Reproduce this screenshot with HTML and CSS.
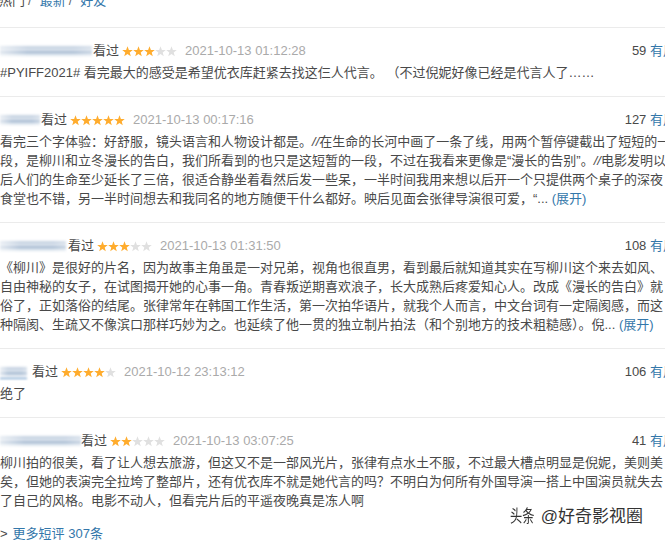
FILE: index.html
```html
<!DOCTYPE html>
<html lang="zh-CN">
<head>
<meta charset="utf-8">
<title>短评</title>
<link rel="stylesheet" href="styles.css">
</head>
<body>
<svg class="defs" width="0" height="0" aria-hidden="true">
  <defs>
    <polygon id="star" points="5,0.2 6.25,3.55 9.8,3.65 7,5.85 8,9.3 5,7.3 2,9.3 3,5.85 0.2,3.65 3.75,3.55"/>
  </defs>
</svg>
<div class="page">
  <div class="tabs"><span class="cur">热门</span><span class="sep">/</span><a class="lnk">最新</a><span class="sep">/</span><a class="lnk">好友</a></div>

  <div class="comment">
    <div class="head">
      <span class="user u1"></span>
      <span class="watched">看过</span>
      <span class="stars">
        <svg class="on" viewBox="0 0 10 10"><use href="#star"/></svg><svg class="on" viewBox="0 0 10 10"><use href="#star"/></svg><svg class="on" viewBox="0 0 10 10"><use href="#star"/></svg><svg class="off" viewBox="0 0 10 10"><use href="#star"/></svg><svg class="off" viewBox="0 0 10 10"><use href="#star"/></svg>
      </span>
      <span class="time">2021-10-13 01:12:28</span>
      <span class="votes"><span class="num">59</span> <a class="lnk">有用</a></span>
    </div>
    <div class="text">
      <div>#PYIFF2021# 看完最大的感受是希望优衣库赶紧去找这仨人代言。 （不过倪妮好像已经是代言人了……</div>
    </div>
  </div>

  <div class="comment">
    <div class="head">
      <span class="user u2"></span>
      <span class="watched">看过</span>
      <span class="stars">
        <svg class="on" viewBox="0 0 10 10"><use href="#star"/></svg><svg class="on" viewBox="0 0 10 10"><use href="#star"/></svg><svg class="on" viewBox="0 0 10 10"><use href="#star"/></svg><svg class="on" viewBox="0 0 10 10"><use href="#star"/></svg><svg class="on" viewBox="0 0 10 10"><use href="#star"/></svg>
      </span>
      <span class="time">2021-10-13 00:17:16</span>
      <span class="votes"><span class="num">127</span> <a class="lnk">有用</a></span>
    </div>
    <div class="text">
      <div>看完三个字体验：好舒服，镜头语言和人物设计都是。<i>//</i>在生命的长河中画了一条了线，用两个暂停键截出了短短的一</div>
      <div>段，是柳川和立冬漫长的告白，我们所看到的也只是这短暂的一段，不过在我看来更像是“漫长的告别”。<i>//</i>电影发明以</div>
      <div>后人们的生命至少延长了三倍，很适合静坐着看然后发一些呆，一半时间我用来想以后开一个只提供两个桌子的深夜</div>
      <div>食堂也不错，另一半时间想去和我同名的地方随便干什么都好。映后见面会张律导演很可爱，“... <a class="lnk">(展开)</a></div>
    </div>
  </div>

  <div class="comment">
    <div class="head">
      <span class="user u3"></span>
      <span class="watched">看过</span>
      <span class="stars">
        <svg class="on" viewBox="0 0 10 10"><use href="#star"/></svg><svg class="on" viewBox="0 0 10 10"><use href="#star"/></svg><svg class="on" viewBox="0 0 10 10"><use href="#star"/></svg><svg class="off" viewBox="0 0 10 10"><use href="#star"/></svg><svg class="off" viewBox="0 0 10 10"><use href="#star"/></svg>
      </span>
      <span class="time">2021-10-13 01:31:50</span>
      <span class="votes"><span class="num">108</span> <a class="lnk">有用</a></span>
    </div>
    <div class="text">
      <div>《柳川》是很好的片名，因为故事主角虽是一对兄弟，视角也很直男，看到最后就知道其实在写柳川这个来去如风、</div>
      <div>自由神秘的女子，在试图揭开她的心事一角。青春叛逆期喜欢浪子，长大成熟后疼爱知心人。改成《漫长的告白》就</div>
      <div>俗了，正如落俗的结尾。张律常年在韩国工作生活，第一次拍华语片，就我个人而言，中文台词有一定隔阂感，而这</div>
      <div>种隔阂、生疏又不像滨口那样巧妙为之。也延续了他一贯的独立制片拍法（和个别地方的技术粗糙感）。倪... <a class="lnk">(展开)</a></div>
    </div>
  </div>

  <div class="comment">
    <div class="head">
      <span class="user u4"></span>
      <span class="watched w4">看过</span>
      <span class="stars">
        <svg class="on" viewBox="0 0 10 10"><use href="#star"/></svg><svg class="on" viewBox="0 0 10 10"><use href="#star"/></svg><svg class="on" viewBox="0 0 10 10"><use href="#star"/></svg><svg class="on" viewBox="0 0 10 10"><use href="#star"/></svg><svg class="off" viewBox="0 0 10 10"><use href="#star"/></svg>
      </span>
      <span class="time">2021-10-12 23:13:12</span>
      <span class="votes"><span class="num">106</span> <a class="lnk">有用</a></span>
    </div>
    <div class="text">
      <div>绝了</div>
    </div>
  </div>

  <div class="comment">
    <div class="head">
      <span class="user u5"></span>
      <span class="watched">看过</span>
      <span class="stars">
        <svg class="on" viewBox="0 0 10 10"><use href="#star"/></svg><svg class="on" viewBox="0 0 10 10"><use href="#star"/></svg><svg class="off" viewBox="0 0 10 10"><use href="#star"/></svg><svg class="off" viewBox="0 0 10 10"><use href="#star"/></svg><svg class="off" viewBox="0 0 10 10"><use href="#star"/></svg>
      </span>
      <span class="time">2021-10-13 03:07:25</span>
      <span class="votes"><span class="num">41</span> <a class="lnk">有用</a></span>
    </div>
    <div class="text">
      <div>柳川拍的很美，看了让人想去旅游，但这又不是一部风光片，张律有点水土不服，不过最大槽点明显是倪妮，美则美</div>
      <div>矣，但她的表演完全拉垮了整部片，还有优衣库不就是她代言的吗？不明白为何所有外国导演一搭上中国演员就失去</div>
      <div>了自己的风格。电影不动人，但看完片后的平遥夜晚真是冻人啊</div>
    </div>
  </div>

  <div class="more"><span class="arrow">&gt;</span><a class="lnk">更多短评 307条</a></div>

  <div class="watermark"><span class="brand">头条</span> @好奇影视圈</div>
</div>
</body>
</html>
```

FILE: styles.css
```css
html, body {
  margin: 0;
  padding: 0;
  background: #fff;
  overflow: hidden;
}

body {
  font-family: "Liberation Sans", "Noto Sans CJK SC", sans-serif;
  font-size: 13px;
  color: #494949;
}

.defs {
  position: absolute;
  width: 0;
  height: 0;
}

.page {
  position: relative;
  width: 676px;
  margin-top: -9px;
}

.lnk {
  color: #3377aa;
  text-decoration: none;
}

.tabs {
  height: 20px;
  line-height: 20px;
  margin-bottom: 16px;
  margin-left: -1px;
  white-space: nowrap;
}

.tabs .cur {
  color: #494949;
}

.tabs .sep {
  color: #666;
  padding: 0 8px 0 3px;
}

.comment {
  border-top: 1px solid #ebebeb;
  padding: 13px 0 14px;
}

.head {
  display: flex;
  align-items: center;
  height: 20px;
  line-height: 20px;
  white-space: nowrap;
}

.user {
  display: block;
  height: 12px;
  flex: none;
  background:
    linear-gradient(to right, rgba(255,255,255,0.6), rgba(255,255,255,0) 30%, rgba(255,255,255,0) 80%, rgba(255,255,255,0.3)),
    linear-gradient(to bottom, #ffffff 0%, #bccbdd 22%, #e6ecf3 40%, #a2b7cf 58%, #d3deea 76%, #ffffff 100%);
  filter: blur(0.8px);
}

.u1 { width: 92px; margin-right: 1px; }
.u2 { width: 40px; margin-right: 1px; }
.u3 { width: 66px; margin-right: 2px; }
.u4 { width: 27px; margin-right: 5px; border-bottom: 1px solid #5b8fc4; }
.u5 { width: 81px; margin-right: 0; }

.watched {
  color: #494949;
}

.stars {
  display: flex;
  margin: 0 8px 0 3px;
}

.stars svg {
  display: block;
  width: 11px;
  height: 11px;
}

.stars .on { fill: #ffac2d; }
.stars .off { fill: #e0e0e0; }

.time {
  color: #aaaaaa;
}

.votes {
  margin-left: auto;
}

.votes .num {
  color: #494949;
}

.text {
  margin-top: 2px;
  line-height: 19px;
  white-space: nowrap;
}

.text i {
  font-style: italic;
}

.more {
  height: 20px;
  line-height: 20px;
  white-space: nowrap;
}

.more .arrow {
  color: #494949;
  margin-right: 5px;
}

.watermark {
  position: absolute;
  left: 510px;
  top: 514px;
  line-height: 24px;
  font-size: 17px;
  color: #333;
  white-space: nowrap;
  text-shadow: 0 0 2px #fff, 0 0 2px #fff, 0 0 3px #fff;
}

.watermark .brand {
  display: inline-block;
  width: 34px;
  margin-right: -8px;
  transform: scaleX(0.72);
  transform-origin: left center;
}
```
